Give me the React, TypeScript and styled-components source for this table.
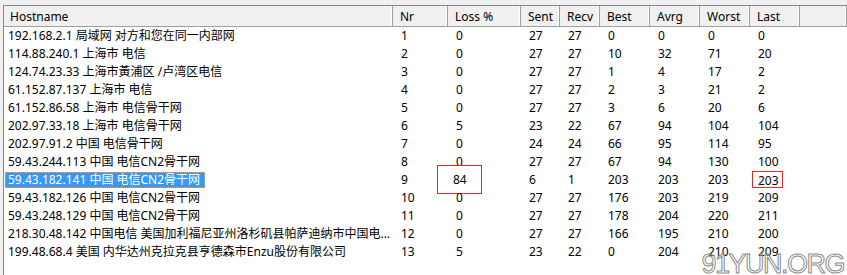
import React from "react";
import styled, {createGlobalStyle, css} from "styled-components";

const GlobalStyle = createGlobalStyle`
  html, body {
    margin: 0;
    padding: 0;
    background: #ffffff;
  }
  body {
    font-family: "Noto Sans", "Noto Sans CJK SC", sans-serif;
    font-size: 12px;
    color: #000;
  }
`

const COLUMNS = "389px 55px 73px 39px 40px 50px 50px 50px 50px 1fr"

const StyledWindow = styled.div`
  position: relative;
  width: 847px;
  height: 275px;
  overflow: hidden;
  background: #f0f0f0;
  padding: 5px 0 0 3px;
  box-sizing: border-box;
`

const StyledList = styled.div`
  height: 100%;
  background: #fff;
  border-top: 1px solid #828790;
  border-left: 1px solid #828790;
`

const StyledHeader = styled.div`
  display: grid;
  grid-template-columns: ${COLUMNS};
  height: 20px;
  background: #f0f0f0;
  border-bottom: 1px solid #a0a0a0;
`

const StyledHeaderCell = styled.div<{$first?: boolean}>`
  display: flex;
  align-items: center;
  padding-left: ${props => props.$first ? 6 : 7}px;
  border-right: 1px solid #a0a0a0;
  box-shadow: inset -1px 0 0 #ffffff;
  white-space: nowrap;
  overflow: hidden;
`

const StyledRow = styled.div`
  display: grid;
  grid-template-columns: ${COLUMNS};
  height: 18px;
  line-height: 18px;
`

const StyledCell = styled.div<{$first?: boolean}>`
  padding-left: ${props => props.$first ? 4 : 8}px;
  padding-right: ${props => props.$first ? 2 : 0}px;
  white-space: nowrap;
  overflow: ${props => props.$first ? 'hidden' : 'visible'};
  text-overflow: ellipsis;
`

const StyledSelected = styled.span`
  display: inline-block;
  margin-left: -3px;
  padding: 0 5px 0 3px;
  height: 16px;
  line-height: 16px;
  background: #3399ff;
  color: #fff;
  outline: 1px dotted #e8a060;
  outline-offset: -1px;
`

// red annotation frame drawn around a value
const StyledMark = styled.span<{$box: 'loss' | 'last'}>`
  display: inline-block;
  box-sizing: border-box;
  border: 1px solid rgb(230, 40, 40);
  vertical-align: top;
  ${props => props.$box === 'loss' ? css`
    width: 45px;
    height: 29px;
    line-height: 27px;
    margin: -6px 0 -5px -19px;
    padding-left: 15px;
  ` : css`
    width: 31px;
    height: 17px;
    line-height: 17px;
    margin: 0 0 0 -6px;
    padding-left: 5px;
  `}
`

const StyledWatermark = styled.div`
  position: absolute;
  right: 3px;
  bottom: -5px;
  font-family: "Liberation Sans", sans-serif;
  font-size: 27px;
  letter-spacing: -1.5px;
  color: rgba(255, 255, 255, 0.35);
  -webkit-text-stroke: 1px #8a8a8a;
  pointer-events: none;
`

type Hop = {
    host: string
    nr: number
    loss: number
    sent: number
    recv: number
    best: number
    avrg: number
    worst: number
    last: number
    selected?: boolean
}

const HOPS: Hop[] = [
    {host: "192.168.2.1 局域网 对方和您在同一内部网", nr: 1, loss: 0, sent: 27, recv: 27, best: 0, avrg: 0, worst: 0, last: 0},
    {host: "114.88.240.1 上海市 电信", nr: 2, loss: 0, sent: 27, recv: 27, best: 10, avrg: 32, worst: 71, last: 20},
    {host: "124.74.23.33 上海市黃浦区 /卢湾区电信", nr: 3, loss: 0, sent: 27, recv: 27, best: 1, avrg: 4, worst: 17, last: 2},
    {host: "61.152.87.137 上海市 电信", nr: 4, loss: 0, sent: 27, recv: 27, best: 2, avrg: 3, worst: 21, last: 2},
    {host: "61.152.86.58 上海市 电信骨干网", nr: 5, loss: 0, sent: 27, recv: 27, best: 3, avrg: 6, worst: 20, last: 6},
    {host: "202.97.33.18 上海市 电信骨干网", nr: 6, loss: 5, sent: 23, recv: 22, best: 67, avrg: 94, worst: 104, last: 104},
    {host: "202.97.91.2 中国 电信骨干网", nr: 7, loss: 0, sent: 24, recv: 24, best: 66, avrg: 95, worst: 114, last: 95},
    {host: "59.43.244.113 中国 电信CN2骨干网", nr: 8, loss: 0, sent: 27, recv: 27, best: 67, avrg: 94, worst: 130, last: 100},
    {host: "59.43.182.141 中国 电信CN2骨干网", nr: 9, loss: 84, sent: 6, recv: 1, best: 203, avrg: 203, worst: 203, last: 203, selected: true},
    {host: "59.43.182.126 中国 电信CN2骨干网", nr: 10, loss: 0, sent: 27, recv: 27, best: 176, avrg: 203, worst: 219, last: 209},
    {host: "59.43.248.129 中国 电信CN2骨干网", nr: 11, loss: 0, sent: 27, recv: 27, best: 178, avrg: 204, worst: 220, last: 211},
    {host: "218.30.48.142 中国电信 美国加利福尼亚州洛杉矶县帕萨迪纳市中国电信骨干网", nr: 12, loss: 0, sent: 27, recv: 27, best: 166, avrg: 195, worst: 210, last: 200},
    {host: "199.48.68.4 美国 内华达州克拉克县亨德森市Enzu股份有限公司", nr: 13, loss: 5, sent: 23, recv: 22, best: 0, avrg: 204, worst: 210, last: 209},
]

const HEADERS = ["Hostname", "Nr", "Loss %", "Sent", "Recv", "Best", "Avrg", "Worst", "Last", ""]

const App: React.FC = () => {
    return (
        <>
            <GlobalStyle/>
            <StyledWindow>
                <StyledList>
                    <StyledHeader>
                        {HEADERS.map((label, index) => (
                            <StyledHeaderCell key={index} $first={index === 0}>{label}</StyledHeaderCell>
                        ))}
                    </StyledHeader>
                    {HOPS.map(hop => (
                        <StyledRow key={hop.nr}>
                            <StyledCell $first>
                                {hop.selected ? <StyledSelected>{hop.host}</StyledSelected> : hop.host}
                            </StyledCell>
                            <StyledCell>{hop.nr}</StyledCell>
                            <StyledCell>
                                {hop.selected ? <StyledMark $box="loss">{hop.loss}</StyledMark> : hop.loss}
                            </StyledCell>
                            <StyledCell>{hop.sent}</StyledCell>
                            <StyledCell>{hop.recv}</StyledCell>
                            <StyledCell>{hop.best}</StyledCell>
                            <StyledCell>{hop.avrg}</StyledCell>
                            <StyledCell>{hop.worst}</StyledCell>
                            <StyledCell>
                                {hop.selected ? <StyledMark $box="last">{hop.last}</StyledMark> : hop.last}
                            </StyledCell>
                            <StyledCell/>
                        </StyledRow>
                    ))}
                </StyledList>
                <StyledWatermark>91YUN.ORG</StyledWatermark>
            </StyledWindow>
        </>
    );
};

export default App;
